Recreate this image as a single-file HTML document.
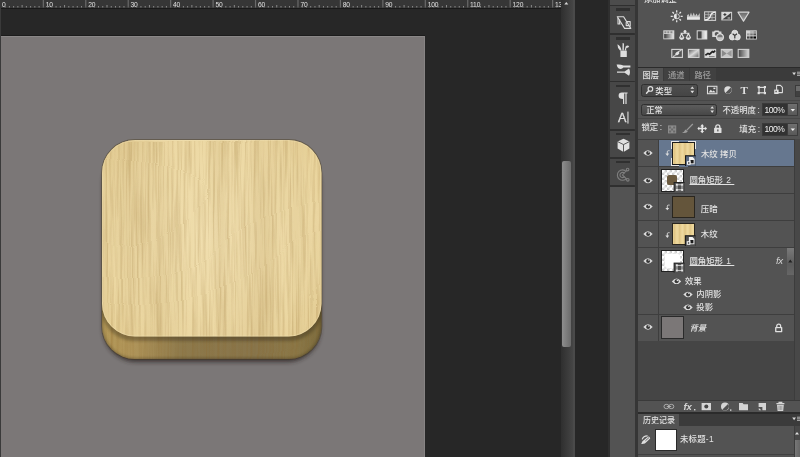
<!DOCTYPE html>
<html lang="zh-CN">
<head>
<meta charset="utf-8">
<title>Photoshop</title>
<style>
html,body{margin:0;padding:0;background:#272727;}
body{width:800px;height:457px;position:relative;overflow:hidden;font-family:"Liberation Sans","Noto Sans CJK SC",sans-serif;font-size:8.5px;line-height:1;color:#e4e4e4;-webkit-font-smoothing:antialiased}
.a{position:absolute}
svg{position:absolute;overflow:visible}
/* ---------- document area ---------- */
#ruler{left:0;top:0;width:561px;height:8.5px;background:#363636;border-bottom:1px solid #191919;box-sizing:border-box}
#ruler span{position:absolute;will-change:opacity;opacity:0.999;top:0.5px;margin-left:0.8px;font-size:6.7px;line-height:7px;color:#e2e2e2;letter-spacing:-0.2px}
#canvas{left:1px;top:36px;width:424px;height:421px;background:#7b7777;border-top:1px solid #8a8787;border-right:1px solid #878484;box-sizing:border-box;box-shadow:0 -1px 0 #1c1c1c}
#leftedge{left:0;top:8px;width:1px;height:449px;background:#3a3a3a}
/* scrollbar */
#vtrack{left:561px;top:0;width:12px;height:457px;background:linear-gradient(90deg,#2f2f2f,#454545)}
#vthumb{left:562px;top:161px;width:9px;height:186px;border-radius:2px;background:linear-gradient(90deg,#8e8e8e,#6b6b6b)}
#vsep{left:573px;top:0;width:2px;height:457px;background:#4a4a4a}
/* tool column */
#tcol{left:608px;top:0;width:30px;height:457px;background:linear-gradient(90deg,#2f2f2f 0,#2f2f2f 26px,#363636 27px,#363636 100%)}
.tsec{position:absolute;left:1.8px;width:25.5px;background:#474747}
.grip{position:absolute;left:8px;width:14px;height:2.5px;background:#303030}
/* panels */
#panel{left:637.6px;top:0;width:162.4px;height:457px;background:#535353}
.t{position:absolute;will-change:opacity;opacity:0.999;white-space:nowrap;font-weight:500;font-size:8.4px;line-height:10px;height:10px;color:#e2e2e2}
.dim{color:#9c9c9c}
.n{font-weight:400;font-size:8.5px;letter-spacing:-0.55px;color:#f4f4f4}
.c{font-style:normal;margin-left:1.6px}
.hl{position:absolute;left:638px;width:162px;height:1px;background:#404040}
.tab{position:absolute;top:68px;height:12.5px;background:#535353}
.tabbar{position:absolute;left:638px;width:162px;height:12.5px;background:#3b3b3b}
.dd{position:absolute;box-sizing:border-box;border:1px solid #303030;border-radius:2.5px;background:linear-gradient(#5c5c5c,#474747)}
.inp{position:absolute;box-sizing:border-box;background:#323232;border:1px solid #3a3a3a;font-size:8.4px;line-height:11px;color:#eee;padding-left:2.3px;will-change:opacity;opacity:0.999}
.btn{position:absolute;box-sizing:border-box;background:linear-gradient(#707070,#585858);border:1px solid #3c3c3c}
.row{position:absolute;left:638px;width:156px;background:#535353}
.thumb{position:absolute;box-sizing:border-box;border:1px solid #222}
.chk{background-color:#fff;background-image:linear-gradient(45deg,#ccc 25%,transparent 25%,transparent 75%,#ccc 75%),linear-gradient(45deg,#ccc 25%,transparent 25%,transparent 75%,#ccc 75%);background-size:5px 5px;background-position:0 0,2.5px 2.5px}
.u{text-decoration:underline;text-underline-offset:1px}
</style>
</head>
<body>
<!-- ruler -->
<div id="ruler" class="a"><span style="left:1.2px">0</span><span style="left:44.9px">10</span><span style="left:87.4px">20</span><span style="left:129.8px">30</span><span style="left:172.3px">40</span><span style="left:214.7px">50</span><span style="left:257.1px">60</span><span style="left:299.6px">70</span><span style="left:342.0px">80</span><span style="left:384.5px">90</span><span style="left:426.9px">100</span><span style="left:469.3px">110</span><span style="left:511.8px">120</span><span style="left:554.2px">130</span></div>
<svg class="a" style="left:0;top:0" width="561" height="8" viewBox="0 0 561 8"><path d="M5.14 6V7.5M9.39 6V7.5M13.63 6V7.5M17.88 6V7.5M26.36 6V7.5M30.61 6V7.5M34.85 6V7.5M39.10 6V7.5M47.58 6V7.5M51.83 6V7.5M56.07 6V7.5M60.32 6V7.5M68.80 6V7.5M73.05 6V7.5M77.29 6V7.5M81.54 6V7.5M90.02 6V7.5M94.27 6V7.5M98.51 6V7.5M102.76 6V7.5M111.24 6V7.5M115.49 6V7.5M119.73 6V7.5M123.98 6V7.5M132.46 6V7.5M136.71 6V7.5M140.95 6V7.5M145.20 6V7.5M153.68 6V7.5M157.93 6V7.5M162.17 6V7.5M166.42 6V7.5M174.90 6V7.5M179.15 6V7.5M183.39 6V7.5M187.64 6V7.5M196.12 6V7.5M200.37 6V7.5M204.61 6V7.5M208.86 6V7.5M217.34 6V7.5M221.59 6V7.5M225.83 6V7.5M230.08 6V7.5M238.56 6V7.5M242.81 6V7.5M247.05 6V7.5M251.30 6V7.5M259.78 6V7.5M264.03 6V7.5M268.27 6V7.5M272.52 6V7.5M281.00 6V7.5M285.25 6V7.5M289.49 6V7.5M293.74 6V7.5M302.22 6V7.5M306.47 6V7.5M310.71 6V7.5M314.96 6V7.5M323.44 6V7.5M327.69 6V7.5M331.93 6V7.5M336.18 6V7.5M344.66 6V7.5M348.91 6V7.5M353.15 6V7.5M357.40 6V7.5M365.88 6V7.5M370.13 6V7.5M374.37 6V7.5M378.62 6V7.5M387.10 6V7.5M391.35 6V7.5M395.59 6V7.5M399.84 6V7.5M408.32 6V7.5M412.57 6V7.5M416.81 6V7.5M421.06 6V7.5M429.54 6V7.5M433.79 6V7.5M438.03 6V7.5M442.28 6V7.5M450.76 6V7.5M455.01 6V7.5M459.25 6V7.5M463.50 6V7.5M471.98 6V7.5M476.23 6V7.5M480.47 6V7.5M484.72 6V7.5M493.20 6V7.5M497.45 6V7.5M501.69 6V7.5M505.94 6V7.5M514.42 6V7.5M518.67 6V7.5M522.91 6V7.5M527.16 6V7.5M535.64 6V7.5M539.89 6V7.5M544.13 6V7.5M548.38 6V7.5M556.86 6V7.5" stroke="#8a8a8a" stroke-width="1" fill="none"/><path d="M22.12 5V7.5M64.56 5V7.5M107.00 5V7.5M149.44 5V7.5M191.88 5V7.5M234.32 5V7.5M276.76 5V7.5M319.20 5V7.5M361.64 5V7.5M404.08 5V7.5M446.52 5V7.5M488.96 5V7.5M531.40 5V7.5" stroke="#8a8a8a" stroke-width="1" fill="none"/><path d="M43.34 0V7.5M85.78 0V7.5M128.22 0V7.5M170.66 0V7.5M213.10 0V7.5M255.54 0V7.5M297.98 0V7.5M340.42 0V7.5M382.86 0V7.5M425.30 0V7.5M467.74 0V7.5M510.18 0V7.5M552.62 0V7.5" stroke="#6a6a6a" stroke-width="1.2" fill="none"/></svg>
<div id="leftedge" class="a"></div>
<div id="canvas" class="a"></div>
<!-- wood icon -->
<svg class="a" style="left:0;top:0" width="800" height="457" viewBox="0 0 800 457">
<defs>
<filter id="grain" x="0" y="0" width="100%" height="100%" color-interpolation-filters="sRGB">
<feTurbulence type="fractalNoise" baseFrequency="0.045 0.0022" numOctaves="3" seed="11" result="n"/>
<feColorMatrix in="n" type="matrix" values="0 0 0 0 0.60  0 0 0 0 0.46  0 0 0 0 0.22  2.4 0 0 0 -0.95"/>
</filter>
<filter id="grain2" x="0" y="0" width="100%" height="100%" color-interpolation-filters="sRGB">
<feTurbulence type="fractalNoise" baseFrequency="0.42 0.011" numOctaves="3" seed="5" result="n"/>
<feTurbulence type="fractalNoise" baseFrequency="0.004 0.008" numOctaves="1" seed="2" result="w"/>
<feDisplacementMap in="n" in2="w" scale="7" xChannelSelector="R" yChannelSelector="G" result="d"/>
<feColorMatrix in="d" type="matrix" values="0 0 0 0 0.55  0 0 0 0 0.40  0 0 0 0 0.16  2.6 0 0 0 -1.1"/>
</filter>
<filter id="blur2" x="-10%" y="-10%" width="120%" height="120%"><feGaussianBlur stdDeviation="1.8"/></filter>
<filter id="blur3" x="-10%" y="-10%" width="120%" height="130%"><feGaussianBlur stdDeviation="2.2"/></filter>
<clipPath id="cpBase"><rect x="102" y="140" width="219.5" height="219" rx="33" ry="33"/></clipPath>
<clipPath id="cpTop"><rect x="102" y="140" width="219.5" height="196.5" rx="33" ry="33"/></clipPath>
<linearGradient id="sideG" x1="0" y1="300" x2="0" y2="359" gradientUnits="userSpaceOnUse">
<stop offset="0" stop-color="#000" stop-opacity="0.16"/><stop offset="0.61" stop-color="#000" stop-opacity="0.16"/><stop offset="0.76" stop-color="#000" stop-opacity="0"/><stop offset="0.9" stop-color="#000" stop-opacity="0.02"/><stop offset="1" stop-color="#1a1a10" stop-opacity="0.3"/>
</linearGradient>
<linearGradient id="sideH" x1="102" y1="0" x2="321.5" y2="0" gradientUnits="userSpaceOnUse">
<stop offset="0" stop-color="#b39858"/><stop offset="0.14" stop-color="#b0955a"/><stop offset="0.36" stop-color="#8e7a4c"/><stop offset="0.7" stop-color="#88754b"/><stop offset="0.88" stop-color="#8b7848"/><stop offset="1" stop-color="#7d6c3e"/>
</linearGradient>
<radialGradient id="topG" cx="211" cy="235" r="150" gradientUnits="userSpaceOnUse">
<stop offset="0" stop-color="#f0deae"/><stop offset="0.7" stop-color="#ecd8a3"/><stop offset="1" stop-color="#e6cf95"/>
</radialGradient>
</defs>
<!-- drop shadow -->
<rect x="103" y="150" width="217.5" height="212" rx="33" fill="#2a2420" opacity="0.75" filter="url(#blur3)"/>
<rect x="101.7" y="139.7" width="220.1" height="219.6" rx="33.3" fill="none" stroke="#4a3c22" stroke-opacity="0.45" stroke-width="1.2"/>
<!-- base / side -->
<g clip-path="url(#cpBase)">
<rect x="102" y="140" width="220" height="220" fill="url(#sideH)"/>
<rect x="102" y="140" width="220" height="220" filter="url(#grain2)" opacity="0.25"/>
<rect x="101" y="144" width="221.5" height="197" rx="33.5" fill="#1c1508" opacity="0.3" filter="url(#blur2)"/>
<rect x="101" y="139" width="221.5" height="221" rx="34" fill="none" stroke="#1c1508" stroke-width="4" opacity="0.33" filter="url(#blur2)"/>
</g>
<!-- top face -->
<g clip-path="url(#cpTop)">
<rect x="102" y="140" width="220" height="197" fill="url(#topG)"/>
<rect x="102" y="140" width="220" height="197" filter="url(#grain)" opacity="0.13"/>
<rect x="102" y="140" width="220" height="197" filter="url(#grain2)" opacity="0.2"/>
</g>
<rect x="102.5" y="140.5" width="218.5" height="195.5" rx="32.5" fill="none" stroke="#f4e6bb" stroke-opacity="0.35" stroke-width="1"/>
</svg>
<div id="vtrack" class="a"></div>
<div id="vthumb" class="a"></div>
<div id="vsep" class="a"></div>

<div id="tcol" class="a">
<div class="tsec" style="top:0px;height:4.5px;background:#4c4c4c"></div>
<div class="tsec" style="top:6px;height:27px;background:#474747"></div>
<div class="tsec" style="top:35px;height:45.5px;background:#474747"></div>
<div class="tsec" style="top:82px;height:47px;background:#474747"></div>
<div class="tsec" style="top:131px;height:26px;background:#474747"></div>
<div class="tsec" style="top:158.5px;height:26.5px;background:#474747"></div>
<div class="tsec" style="top:187px;height:270px;background:#535353"></div>
<div class="grip" style="top:8px"></div>
<div class="grip" style="top:37px"></div>
<div class="grip" style="top:84.5px"></div>
<div class="grip" style="top:132.5px"></div>
<div class="grip" style="top:160.5px"></div>
</div>
<div id="panel" class="a"></div>
<!-- adjustments panel -->
<div class="t" style="left:644px;top:-5.5px;font-size:8.2px">添加调整</div>
<div class="a" style="left:638px;top:66.5px;width:162px;height:1.5px;background:#2b2b2b"></div>
<!-- layers tabs -->
<div class="tabbar" style="top:68px"></div>
<div class="tab" style="left:638px;width:24.5px"></div>
<div class="tab" style="left:663.5px;width:25.8px;background:#414141"></div>
<div class="tab" style="left:690.3px;width:25.5px;background:#414141"></div>
<div class="t" style="left:642.5px;top:71px;font-size:8.2px">图层</div>
<div class="t dim" style="left:668px;top:71px;font-size:8.2px">通道</div>
<div class="t dim" style="left:694.5px;top:71px;font-size:8.2px">路径</div>
<!-- filter row -->
<div class="dd" style="left:640.5px;top:83.5px;width:57px;height:13px;background:linear-gradient(#4e4e4e,#454545)"></div>
<div class="t" style="left:655.3px;top:86px;font-size:8.4px">类型</div>
<div class="a" style="left:794.5px;top:84.5px;width:6px;height:12px;background:linear-gradient(#6a6a6a 0,#6a6a6a 45%,#404040 45%,#404040 100%);border:1px solid #3a3a3a;box-sizing:border-box"></div>
<div class="hl" style="top:100px;background:#474747"></div>
<!-- blend row -->
<div class="dd" style="left:640.5px;top:103.5px;width:76.5px;height:12.5px"></div>
<div class="t" style="left:646.2px;top:106px;font-size:8.2px">正常</div>
<div class="t" style="left:722.5px;top:105px">不透明度<i class="c">:</i></div>
<div class="inp" style="left:762px;top:103px;width:25.5px;height:13px"></div><div class="t n" style="left:764.6px;top:105px">100%</div>
<div class="btn" style="left:787px;top:103px;width:11px;height:13px"></div>
<div class="hl" style="top:118px;background:#474747"></div>
<!-- lock row -->
<div class="t" style="left:641.5px;top:122px">锁定<i class="c">:</i></div>
<div class="t" style="left:739.3px;top:123.5px">填充<i class="c">:</i></div>
<div class="inp" style="left:762px;top:122.5px;width:25.5px;height:13px"></div><div class="t n" style="left:764.6px;top:124.2px">100%</div>
<div class="btn" style="left:787px;top:122.5px;width:11px;height:13px"></div>
<!-- layer list -->
<div class="a" style="left:638px;top:138.5px;width:162px;height:203px;background:#3e3e3e"></div>
<div class="a" style="left:794px;top:138.5px;width:6px;height:262px;background:#484848;border-left:1px solid #3c3c3c;box-sizing:border-box"></div>
<div class="row" style="top:139.5px;height:26.5px"></div>
<div class="a" style="left:659px;top:139.5px;width:135px;height:26.5px;background:#66778f"></div>
<div class="row" style="top:167px;height:25.5px"></div>
<div class="row" style="top:193.5px;height:26px"></div>
<div class="row" style="top:220.5px;height:26.5px"></div>
<div class="row" style="top:248px;height:65.5px"></div>
<div class="row" style="top:314.5px;height:26.5px"></div>
<div class="a" style="left:658px;top:139.5px;width:1px;height:201.5px;background:#3e3e3e"></div>
<!-- row1 thumb: selected brackets -->
<div class="thumb" style="left:671px;top:140.5px;width:25px;height:25.5px;border:1px solid #e8e8e8;background:#66778f"></div>
<div class="a" style="left:679px;top:140px;width:9px;height:27px;background:#66778f"></div>
<div class="a" style="left:670.5px;top:149px;width:26px;height:8.5px;background:#66778f"></div>
<div class="thumb" style="left:672.3px;top:141.8px;width:22.4px;height:23px;background:repeating-linear-gradient(90deg,rgba(160,120,50,0) 0,rgba(160,120,50,0.16) 1.3px,rgba(160,120,50,0) 2.9px,rgba(255,245,210,0.18) 4.1px,rgba(160,120,50,0) 5.3px),#ead294;border-color:#1c1c1c"></div>
<div class="t" style="left:701px;top:148.5px">木纹 拷贝</div>
<!-- row2 -->
<div class="thumb chk" style="left:661.3px;top:169px;width:22.5px;height:22.5px"></div>
<div class="a" style="left:667.3px;top:175px;width:10px;height:9.5px;border-radius:2px;background:#6b5a3f"></div>
<div class="t u" style="left:689.5px;top:175px;white-space:pre;word-spacing:1px">圆角矩形 2 </div>
<!-- row3 -->
<div class="thumb" style="left:672.2px;top:195.6px;width:22.5px;height:22.6px;background:#64553b;border-color:#2a261f"></div>
<div class="t" style="left:700.8px;top:203.5px">压暗</div>
<!-- row4 -->
<div class="thumb" style="left:672.2px;top:222.8px;width:22.5px;height:22.5px;background:repeating-linear-gradient(90deg,rgba(160,120,50,0) 0,rgba(160,120,50,0.16) 1.3px,rgba(160,120,50,0) 2.9px,rgba(255,245,210,0.18) 4.1px,rgba(160,120,50,0) 5.3px),#ead294;border-color:#2a261f"></div>
<div class="t" style="left:700.8px;top:229px">木纹</div>
<!-- row5 -->
<div class="thumb chk" style="left:661.3px;top:249.5px;width:22.5px;height:22.5px"></div>
<div class="a" style="left:665.3px;top:253.8px;width:14.5px;height:14px;border-radius:2px;background:#fff"></div>
<div class="t u" style="left:689.5px;top:255.5px;white-space:pre;word-spacing:1px">圆角矩形 1 </div>
<div class="t" style="left:776px;top:256px;font-style:italic;font-size:9.6px;letter-spacing:-0.3px;color:#d8d8d8">fx</div>
<div class="btn" style="left:786.5px;top:247.5px;width:7.5px;height:27px;background:linear-gradient(#7a7a7a,#5c5c5c 60%,#666);border:none"></div>
<div class="t" style="left:685px;top:276px">效果</div>
<div class="t" style="left:696.3px;top:289px">内阴影</div>
<div class="t" style="left:696.3px;top:302px">投影</div>
<!-- row6 background -->
<div class="thumb" style="left:661.3px;top:316px;width:22.5px;height:22.5px;background:#7b7777;border-color:#2a2a2a"></div>
<div class="t" style="left:689.5px;top:322.5px;font-style:italic">背景</div>
<!-- empty area -->
<div class="a" style="left:638px;top:341px;width:156px;height:59px;background:#454545"></div>
<div class="a" style="left:638px;top:399.5px;width:162px;height:1px;background:#3a3a3a"></div>
<!-- bottom toolbar -->
<div class="a" style="left:638px;top:400.5px;width:162px;height:11.5px;background:#535353"></div>
<div class="a" style="left:638px;top:412px;width:162px;height:2px;background:#2b2b2b"></div>
<!-- history -->
<div class="tabbar" style="top:414px;height:12px"></div>
<div class="tab" style="left:638px;top:414px;width:40.5px;height:12px"></div>
<div class="t" style="left:643px;top:415.5px;font-size:8px">历史记录</div>
<div class="a" style="left:638px;top:426px;width:162px;height:31px;background:#535353"></div>
<div class="hl" style="top:453.5px;width:156px;background:#404040"></div>
<div class="a" style="left:793.5px;top:426px;width:6.5px;height:31px;background:#484848;border-left:1px solid #3c3c3c;box-sizing:border-box"></div>
<div class="a" style="left:794.5px;top:439.5px;width:5.5px;height:18px;background:linear-gradient(90deg,#777,#666)"></div>
<div class="thumb" style="left:655.3px;top:428.5px;width:22px;height:22px;background:#fff;border-color:#2a2a2a"></div>
<div class="t" style="left:680px;top:434px;letter-spacing:0.25px">未标题-1</div>

<svg class="a" style="left:0;top:0" width="800" height="457" viewBox="0 0 800 457">
<defs>
<symbol id="eye" viewBox="0 0 10 7" overflow="visible">
<path d="M0.3 3.5Q5 -2.1 9.7 3.5Q5 8.9 0.3 3.5Z" fill="#dcdcdc"/>
<circle cx="5.1" cy="3.4" r="2" fill="#383838"/><circle cx="5.9" cy="2.6" r="0.75" fill="#e2e2e2"/>
</symbol>
<symbol id="clip" viewBox="0 0 5 6" overflow="visible">
<path d="M4.6 0.7H3.4Q2.3 0.7 2.3 1.8V4" fill="none" stroke="#dedede" stroke-width="0.9"/><path d="M0.4 3.6H4.2L2.3 5.9Z" fill="#dedede"/>
</symbol>
<symbol id="sobadge" viewBox="0 0 9 9" overflow="visible">
<rect x="0" y="0" width="9" height="9" fill="#1a1a1a"/>
<rect x="0.9" y="0.9" width="8.1" height="8.1" fill="#5a6a82"/>
<path d="M3.4 1.6H6.4L8 3.2V7.6H3.4Z" fill="#f2f2f2"/>
<rect x="4.6" y="4" width="2.6" height="2.8" fill="#1c1c1c"/>
<rect x="1.6" y="5" width="3" height="3" fill="#f2f2f2"/><rect x="2.5" y="5.9" width="1.2" height="1.2" fill="#333"/>
</symbol>
<symbol id="sobadge2" viewBox="0 0 9 9" overflow="visible">
<rect x="0" y="0" width="9" height="9" fill="#1a1a1a"/>
<rect x="0.9" y="0.9" width="8.1" height="8.1" fill="#4e4e4e"/>
<path d="M3.4 1.6H6.4L8 3.2V7.6H3.4Z" fill="#f2f2f2"/>
<rect x="4.6" y="4" width="2.6" height="2.8" fill="#1c1c1c"/>
<rect x="1.6" y="5" width="3" height="3" fill="#f2f2f2"/><rect x="2.5" y="5.9" width="1.2" height="1.2" fill="#333"/>
</symbol>
<symbol id="shbadge" viewBox="0 0 9 9" overflow="visible">
<rect x="2" y="2" width="5" height="5" fill="#4e4e4e" stroke="#d4d4d4" stroke-width="0.9"/>
<g fill="#e4e4e4"><rect x="0.9" y="0.9" width="1.9" height="1.9"/><rect x="6.2" y="0.9" width="1.9" height="1.9"/><rect x="0.9" y="6.2" width="1.9" height="1.9"/><rect x="6.2" y="6.2" width="1.9" height="1.9"/></g>
</symbol>
<symbol id="lock" viewBox="0 0 8 9" overflow="visible">
<path d="M2 4V2.8A2 2 0 0 1 6 2.8V4" fill="none" stroke="#e0e0e0" stroke-width="1.3"/>
<rect x="0.3" y="3.8" width="7.4" height="5.2" rx="0.6" fill="#e0e0e0"/><rect x="3.4" y="5.4" width="1.3" height="2" fill="#555"/>
</symbol>
<linearGradient id="gH" x1="0" x2="1" y1="0" y2="0"><stop offset="0" stop-color="#3a3a3a"/><stop offset="1" stop-color="#e6e6e6"/></linearGradient>
<linearGradient id="gD" x1="0" x2="1" y1="0" y2="1"><stop offset="0" stop-color="#555"/><stop offset="0.5" stop-color="#d8d8d8"/><stop offset="1" stop-color="#555"/></linearGradient>
<linearGradient id="gV" x1="0" x2="0" y1="0" y2="1"><stop offset="0" stop-color="#5a5a5a"/><stop offset="1" stop-color="#cfcfcf"/></linearGradient>
<linearGradient id="gV2" x1="0" x2="0" y1="0" y2="1"><stop offset="0" stop-color="#666"/><stop offset="1" stop-color="#aaa"/></linearGradient>
<linearGradient id="gHl" x1="0" x2="1" y1="0" y2="0"><stop offset="0" stop-color="#bbb"/><stop offset="1" stop-color="#f2f2f2"/></linearGradient>
<linearGradient id="gHm" x1="0" x2="1" y1="0" y2="0"><stop offset="0" stop-color="#444"/><stop offset="1" stop-color="#d8d8d8"/></linearGradient>
</defs>

<!-- scrollbar arrow -->
<path d="M564.3 4.6L566.3 2L568.3 4.6Z" fill="#d8d8d8"/>

<!-- tool column icons -->
<g fill="none" stroke="#dcdcdc" stroke-width="1.1" stroke-linejoin="round">
<path d="M617.3 16.8H623.6L630.8 28.4H624.6Z"/>
<path d="M618 18V24H620.6M619.6 19.5V24"/>
<path d="M626 21.6H630.2V26.4M626.2 22V25.6H629"/>
</g>
<g fill="#dedede">
<rect x="620.4" y="50.6" width="6.4" height="6.4"/>
<path d="M617.4 44.2Q620.6 45.5 621.6 50.6H620Q617.5 48.5 617.4 44.2Z"/>
<path d="M622.6 43L624 43.4L623.8 50.6H622.4Z"/>
<path d="M624.6 50.6L625.6 46.5Q627.5 44.6 629.2 46.3Q628.6 48 626.4 48L626 50.6Z"/>
<!-- brush presets -->
<path d="M616.6 64.6Q620 64 623.4 65.4H630.4V67.6H623.4Q621.6 69.8 618.8 68.6Q617 67.6 616.6 64.6Z"/>
<path d="M617 71.4H624.6L629 68.4Q631 72 629 75.8L624.6 72.8H617Z"/>
<!-- pilcrow -->
<path d="M622 92.4H627.6V93.6H626.6V104H625.4V93.6H624.2V104H623V99Q618.6 99 618.6 95.7Q618.6 92.4 622 92.4Z"/>
</g>
<text x="618" y="122.2" font-family="Liberation Sans,sans-serif" font-size="12.6" fill="#e2e2e2" stroke="#e2e2e2" stroke-width="0.3">A</text>
<rect x="627.4" y="111.6" width="1.1" height="12" fill="#dedede"/>
<!-- cube -->
<path d="M623.5 138.8L629.4 141.6V148.6L623.5 152L617.6 148.6V141.6Z" fill="#e2e2e2"/>
<path d="M617.6 141.6L623.5 144.6L629.4 141.6M623.5 144.6V152" fill="none" stroke="#4a4a4a" stroke-width="0.9"/>
<!-- dim icon -->
<g fill="none" stroke="#7e7e7e" stroke-width="1.1">
<path d="M626.4 171.6A5.2 5.2 0 1 0 626.6 178.4"/>
<path d="M624.6 173.4A2.6 2.6 0 1 0 624.6 176.6"/>
<path d="M622.4 175L627 170M622.4 175L627 179.4"/>
<circle cx="627.6" cy="169.6" r="1.3" fill="#464646"/><circle cx="627.8" cy="179.8" r="1.3" fill="#464646"/>
</g>

<!-- adjustments -->
<path d="M680.60 16.30L682.70 16.30M679.46 19.06L680.94 20.54M676.70 20.20L676.70 22.30M673.94 19.06L672.46 20.54M672.80 16.30L670.70 16.30M673.94 13.54L672.46 12.06M676.70 12.40L676.70 10.30M679.46 13.54L680.94 12.06" stroke="#e4e4e4" stroke-width="1.3" fill="none"/><circle cx="676.7" cy="16.3" r="2.9" fill="#e4e4e4"/><path d="M676.7 14.100000000000001A2.2 2.2 0 0 1 676.7 18.5Z" fill="#555"/>
<path d="M687 19.6V15.6L688.4 14L689.6 16.4L691 12.4L692.2 16L693.8 12.6L695 16L696.6 13.4L697.8 16L699.8 13V19.6Z" fill="#c4c4c4"/><rect x="687" y="17.2" width="12.8" height="2.4" fill="#e6e6e6"/>
<rect x="704.6" y="11.8" width="11" height="8.6" fill="#5c5c5c" stroke="#d4d4d4" stroke-width="1"/><path d="M704.6 14.6H715.6M704.6 17.5H715.6M708.3 11.8V20.4M712 11.8V20.4" stroke="#b8b8b8" stroke-width="0.7" fill="none"/><path d="M705 20Q709.5 19.5 710.4 16Q711.4 12.6 715.4 12.2" stroke="#f0f0f0" stroke-width="1.3" fill="none"/>
<rect x="721.3" y="11.8" width="10.8" height="8.6" fill="#d8d8d8"/><path d="M722.3 19.4L731.1 12.8V19.4Z" fill="#444"/><path d="M723.4 14.6H726.4M724.9 13.1V16.1" stroke="#333" stroke-width="1" fill="none"/><path d="M727.6 18H730.2" stroke="#ddd" stroke-width="0.9"/>
<path d="M738 12.2H749L743.5 21.2Z" fill="url(#gV2)" stroke="#d8d8d8" stroke-width="1.2" stroke-linejoin="round"/>
<rect x="663.3" y="30.3" width="11" height="9" fill="#d4d4d4"/><rect x="664.2" y="34" width="9.2" height="4.4" fill="url(#gH)"/><path d="M664.4 31.2h2v2h-2zM667.3 31.2h2v2h-2zM670.4 31.2h2v2h-2z" fill="#8a8a8a"/>
<g fill="none" stroke="#e0e0e0" stroke-width="1.1"><path d="M685 30.4V33M680.6 33.2H689.4M681.6 33.4L679.6 38M681.6 33.4L683.8 38M688.4 33.4L686.2 38M688.4 33.4L690.6 38"/></g><circle cx="685" cy="31.6" r="1.5" fill="#e0e0e0"/><path d="M679 37.6H684.4Q683.8 40 681.7 40Q679.6 40 679 37.6ZM685.6 37.6H691Q690.4 40 688.3 40Q686.2 40 685.6 37.6Z" fill="#e0e0e0"/>
<rect x="696.7" y="30.3" width="10.6" height="9.2" fill="#d9d9d9"/><rect x="697.7" y="31.3" width="4" height="7.2" fill="#454545"/><rect x="701.9" y="31.3" width="4.4" height="7.2" fill="url(#gHl)"/>
<path d="M712.2 31.4H714L714.8 30.4H718.6L719.4 31.4H721.4V37H712.2Z" fill="#d6d6d6"/><circle cx="716.8" cy="34" r="2.1" fill="#555"/><circle cx="720" cy="37.2" r="3.6" fill="#c4c4c4" stroke="#e2e2e2" stroke-width="1"/><path d="M717.4 37.2A2.6 2.6 0 0 1 722.6 37.2Z" fill="#777"/>
<g fill="#d8d8d8" stroke="#eee" stroke-width="0.8"><circle cx="734.8" cy="33.2" r="3"/><circle cx="732.3" cy="37" r="3"/><circle cx="737.3" cy="37" r="3"/></g><path d="M732.6 33.8L734.8 35.4L737 33.8M734.8 35.4V38.6" stroke="#333" stroke-width="1.2" fill="none"/>
<rect x="746" y="30.3" width="10.8" height="9.2" fill="#d2d2d2"/><g><path d="M747 33.4h2.6v2h-2.6z" fill="#999"/><path d="M750.2 33.4h2.6v2h-2.6z" fill="#777"/><path d="M753.4 33.4h2.6v2h-2.6z" fill="#555"/><path d="M747 36.4h2.6v2.2h-2.6z" fill="#444"/><path d="M750.2 36.4h2.6v2.2h-2.6z" fill="#222"/><path d="M753.4 36.4h2.6v2.2h-2.6z" fill="#000"/><path d="M750.2 31.2h2.6v1.6h-2.6z" fill="#aaa"/><path d="M753.4 31.2h2.6v1.6h-2.6z" fill="#888"/></g>
<rect x="671.8" y="49.4" width="10.6" height="8" fill="#555" stroke="#d6d6d6" stroke-width="1.1"/><path d="M673 56.4Q675 56.4 676 54.4Q678 50.6 681.4 50.4" stroke="#e8e8e8" stroke-width="1" fill="none"/><ellipse cx="677.3" cy="53.4" rx="2.2" ry="1.5" transform="rotate(-35 677.3 53.4)" fill="#e0e0e0"/>
<rect x="688.4" y="49.4" width="10.6" height="8" fill="url(#gD)" stroke="#d6d6d6" stroke-width="1.1"/>
<rect x="705" y="49.4" width="10.6" height="8" fill="#d9d9d9" stroke="#d6d6d6" stroke-width="1.1"/><path d="M705.4 55.2L708 53.4L709.6 54.2L712.4 51.6L713.6 52.2L715.2 50.6" stroke="#222" stroke-width="1.7" fill="none"/><path d="M709 56.6H714.6" stroke="#666" stroke-width="0.8"/>
<rect x="721.3" y="49.4" width="10.8" height="8" fill="#c6c6c6" stroke="#d6d6d6" stroke-width="1.1"/><path d="M721.8 50L726.7 53.4L721.8 56.8Z" fill="#8a8a8a"/><path d="M731.6 50L726.7 53.4L731.6 56.8Z" fill="#9a9a9a"/>
<rect x="738.2" y="49.4" width="10.6" height="8" fill="url(#gHm)" stroke="#d0d0d0" stroke-width="1.1"/>

<!-- panel icons -->
<circle cx="650.4" cy="88.9" r="2.3" fill="none" stroke="#dedede" stroke-width="1.15"/><path d="M648.7 90.7L646.5 93.3" stroke="#dedede" stroke-width="1.4" stroke-linecap="round"/>
<path d="M690.4 88.8L692.3 86.4L694.2 88.8ZM690.4 90.8L692.3 93.2L694.2 90.8Z" fill="#e0e0e0"/>
<rect x="707.5" y="86.3" width="9.4" height="7.4" fill="#4c4c4c" stroke="#dcdcdc" stroke-width="1.1"/><path d="M708.6 92.6L710.8 89.8L712.4 91.4L713.6 90.4L715.8 92.6Z" fill="#e4e4e4"/><rect x="713.4" y="87.6" width="2" height="1.5" fill="#e4e4e4"/>
<circle cx="728" cy="90" r="3.7" fill="#dcdcdc"/><path d="M725.6 92.8A3.7 3.7 0 0 0 730.8 87.6Z" fill="#555"/>
<text x="740.6" y="94" font-family="Liberation Serif,serif" font-weight="bold" font-size="11" fill="#e0e0e0">T</text>
<rect x="759" y="87.4" width="5.6" height="5.4" fill="none" stroke="#dcdcdc" stroke-width="1.2"/><g fill="#e2e2e2"><rect x="757.6" y="86" width="2.2" height="2.2"/><rect x="763.8" y="86" width="2.2" height="2.2"/><rect x="757.6" y="92" width="2.2" height="2.2"/><rect x="763.8" y="92" width="2.2" height="2.2"/></g>
<path d="M776.6 85.4H780.4L782.4 87.4V92.6H776.6Z" fill="#4c4c4c" stroke="#dcdcdc" stroke-width="1.1" stroke-linejoin="round"/><rect x="774.2" y="89.6" width="4.4" height="4.4" fill="#e2e2e2"/><rect x="775.4" y="90.8" width="1.4" height="1.4" fill="#555"/>
<path d="M792.2 72.6H796L794.1 75.19999999999999Z" fill="#d8d8d8"/><path d="M797 72.19999999999999H800M797 73.8H800M797 75.39999999999999H800" stroke="#bbb" stroke-width="0.9"/>
<path d="M792.2 417.6H796L794.1 420.20000000000005Z" fill="#d8d8d8"/><path d="M797 417.20000000000005H800M797 418.8H800M797 420.40000000000003H800" stroke="#bbb" stroke-width="0.9"/>
<path d="M710.4 108.6L712.2 106.2L714 108.6ZM710.4 110.6L712.2 113L714 110.6Z" fill="#e0e0e0"/>
<path d="M790.6 109H795L792.8 111.6Z" fill="#f0f0f0"/>
<path d="M790.6 128.5H795L792.8 131.1Z" fill="#f0f0f0"/>
<rect x="668" y="125.4" width="8.2" height="8" fill="#8c8c8c"/><path d="M669 126.4h2.1v2h-2.1zM673.1 126.4h2.1v2h-2.1zM671.1 128.4h2v2h-2zM669 130.4h2.1v2h-2.1zM673.1 130.4h2.1v2h-2.1z" fill="#6a6a6a"/>
<path d="M692.8 124L686.6 130.4" stroke="#9c9c9c" stroke-width="1.2" fill="none"/><path d="M685.4 129.4L687.8 131.6Q685.6 133.8 682 132.8Q684.4 132 685.4 129.4Z" fill="#9c9c9c"/>
<path d="M702.2 124L704.2 126.4H703V127.8H705.2V126.4L707 128.5L705.2 130.6V129.2H703V131H704.2L702.2 133.2L700.2 131H701.4V129.2H699.2V130.6L697.4 128.5L699.2 126.4V127.8H701.4V126.4H700.2Z" fill="#e6e6e6"/>
<use href="#lock" x="713.8" y="124" width="8" height="9"/>
<use href="#eye" x="643" y="149.5" width="10" height="7"/>
<use href="#eye" x="643" y="177.0" width="10" height="7"/>
<use href="#eye" x="643" y="203.0" width="10" height="7"/>
<use href="#eye" x="643" y="230.5" width="10" height="7"/>
<use href="#eye" x="643" y="257.5" width="10" height="7"/>
<use href="#eye" x="643" y="323.5" width="10" height="7"/>
<use href="#eye" x="671.5" y="277.9" width="10" height="7"/>
<use href="#eye" x="683" y="291.0" width="10" height="7"/>
<use href="#eye" x="683" y="303.9" width="10" height="7"/>
<use href="#clip" x="665" y="150" width="5" height="6"/>
<use href="#clip" x="665" y="204.4" width="5" height="6"/>
<use href="#clip" x="665" y="232" width="5" height="6"/>
<use href="#sobadge" x="685" y="155.2" width="10.8" height="10.8"/>
<use href="#sobadge2" x="684.8" y="235.2" width="10.8" height="10.8"/>
<rect x="673.6" y="182" width="11" height="10" fill="#222"/><rect x="674.6" y="183" width="10" height="9.6" fill="#535353"/><use href="#shbadge" x="675" y="182.8" width="9" height="9"/>
<rect x="673.6" y="262.6" width="11" height="10" fill="#222"/><rect x="674.6" y="263.6" width="10" height="9.6" fill="#535353"/><use href="#shbadge" x="675" y="263.4" width="9" height="9"/>
<path d="M788.2 262.4L790.3 259.6L792.4 262.4Z" fill="#222"/>
<use href="#lock" x="774.8" y="323.4" width="7.8" height="8.8"/><rect x="776.4" y="328.2" width="4.6" height="2.8" fill="#535353"/>
<g fill="none" stroke="#b4b4b4" stroke-width="0.9"><rect x="664" y="404.4" width="5" height="4.2" rx="2.1"/><rect x="668.8" y="404.4" width="5" height="4.2" rx="2.1"/></g><path d="M666.8 406.5H671.2" stroke="#b4b4b4" stroke-width="0.9"/><text x="683.6" y="409.6" font-family="Liberation Sans,sans-serif" font-style="italic" font-weight="bold" font-size="9.6" letter-spacing="-0.3" fill="#d4d4d4">fx</text><rect x="694" y="409" width="1.4" height="1.4" fill="#d4d4d4"/>
<rect x="701.6" y="403" width="9.4" height="7.2" fill="#d4d4d4"/><circle cx="706.3" cy="406.6" r="2" fill="#444"/>
<circle cx="725" cy="406.5" r="4" fill="#d4d4d4"/><path d="M722.4 409.5A4 4 0 0 0 728 403.9Z" fill="#505050"/><rect x="730" y="409.4" width="1.4" height="1.4" fill="#d4d4d4"/>
<path d="M739 403H742.6L743.6 404.2H748V410.2H739Z" fill="#d4d4d4"/>
<path d="M758.6 403H766V410.2H762.4V407H758.6Z" fill="#d4d4d4"/><path d="M758.8 408L761.4 410.2H758.8Z" fill="#d4d4d4"/>
<path d="M776.4 403.6H784.4M779 403.4V402.4H781.8V403.4" stroke="#d4d4d4" stroke-width="1.1" fill="none"/><path d="M777 404.8H783.8L783.2 411H777.6Z" fill="#d4d4d4"/><path d="M779 405.8V410M780.4 405.8V410M781.8 405.8V410" stroke="#777" stroke-width="0.6"/>
<path d="M641.2 444Q642 441 644.6 439.6L648.2 436.4Q650.4 436.4 650.2 438.4L646.8 441.8Q645 444.4 641.2 444Z" fill="#dedede"/><path d="M642.2 439.4Q643.4 435.6 647.6 435.8" stroke="#dedede" stroke-width="1.2" fill="none"/><path d="M645.4 440.8L649.4 437.2" stroke="#535353" stroke-width="0.8"/>
<path d="M795 434.6L797 432L799 434.6Z" fill="#e0e0e0"/>
</svg>

</body>
</html>
